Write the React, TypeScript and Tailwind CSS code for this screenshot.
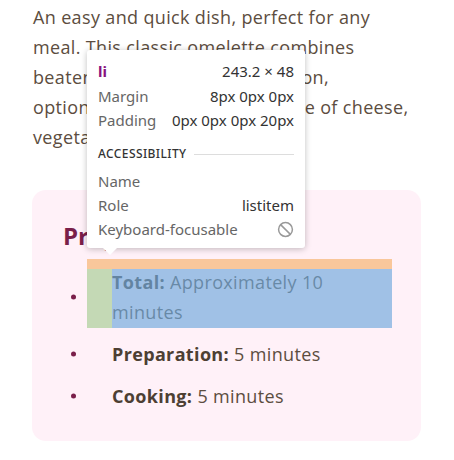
import React from "react";

const body = "font-['Open_Sans','Noto_Sans',sans-serif]";

function Item({ children, first }: { children: React.ReactNode; first?: boolean }) {
  return (
    <li className={`relative ${first ? "mt-[10px]" : "mt-[12px]"} pl-[25px] leading-[30px]`}>
      <span className="absolute left-[-16px] top-1/2 -translate-y-1/2 w-[5px] h-[5px] rounded-full bg-[#7a1f4a]" />
      {children}
    </li>
  );
}

export default function App() {
  return (
    <div className={`relative w-[454px] h-[460px] bg-white overflow-hidden ${body} text-[18px] tracking-[0.35px] text-[#5c4d40]`}>
      <p className="pl-[33px] pt-[2px] leading-[30px] whitespace-nowrap">
        An easy and quick dish, perfect for any<br />
        meal. This classic omelette combines<br />
        beaten eggs cooked to perfection,<br />
        optionally filled with your choice of cheese,<br />
        vegetables, or meats.
      </p>
      <div className="absolute left-[32px] top-[190px] w-[389px] h-[251px] rounded-[14px] bg-[#fff1f8] pl-[31px] pt-[32px]">
        <h2 className="text-[24px] leading-[28px] font-bold tracking-normal text-[#7a1f4a]">Preparation Time</h2>
        <ul className="pl-[24px] w-[329px] pt-[7px]">
          <Item first>
            <b className="font-bold text-[#4d3f33]">Total:</b> Approximately 10<br />minutes
          </Item>
          <Item>
            <b className="font-bold text-[#4d3f33]">Preparation:</b> 5 minutes
          </Item>
          <Item>
            <b className="font-bold text-[#4d3f33]">Cooking:</b> 5 minutes
          </Item>
        </ul>
      </div>
      {/* highlight overlay */}
      <div className="absolute left-[87px] top-[259px] w-[305px] h-[10px] bg-[rgba(246,178,107,0.66)]" />
      <div className="absolute left-[87px] top-[269px] w-[25px] h-[59px] bg-[rgba(147,196,125,0.55)]" />
      <div className="absolute left-[112px] top-[269px] w-[280px] h-[59px] bg-[rgba(111,168,220,0.66)]" />
      {/* tooltip */}
      <div className="absolute left-[87px] top-[50px] w-[218px] h-[198px] bg-white rounded-[3px] shadow-[0_1px_6px_rgba(0,0,0,0.25)] px-[11px] pt-[9px] font-['Noto_Sans','Open_Sans',sans-serif] tracking-normal text-[15px] leading-[24px] text-[#666]">
        <div className="flex justify-between">
          <span className="font-bold text-[#881280] text-[15px]">li</span>
          <span className="text-[#333]">243.2 × 48</span>
        </div>
        <div className="flex justify-between mt-[1px]">
          <span>Margin</span>
          <span className="text-[#333]">8px 0px 0px</span>
        </div>
        <div className="flex justify-between">
          <span>Padding</span>
          <span className="text-[#333]">0px 0px 0px 20px</span>
        </div>
        <div className="flex items-center mt-[10px] gap-[8px]">
          <span className="text-[12px] tracking-[0.4px] text-[#333] font-medium">ACCESSIBILITY</span>
          <div className="flex-1 h-px bg-[#ddd]" />
        </div>
        <div className="mt-[3px]">Name</div>
        <div className="flex justify-between">
          <span>Role</span>
          <span className="text-[#333]">listitem</span>
        </div>
        <div className="flex justify-between items-center">
          <span>Keyboard-focusable</span>
          <svg width="17" height="17" viewBox="0 0 16 16" fill="none" stroke="#999" strokeWidth="1.4">
            <circle cx="8" cy="8" r="6.5" />
            <line x1="3.4" y1="3.4" x2="12.6" y2="12.6" />
          </svg>
        </div>
        <div className="absolute left-[16px] bottom-[-7px] w-0 h-0 border-l-[7px] border-r-[7px] border-t-[7px] border-l-transparent border-r-transparent border-t-white" />
      </div>
    </div>
  );
}
